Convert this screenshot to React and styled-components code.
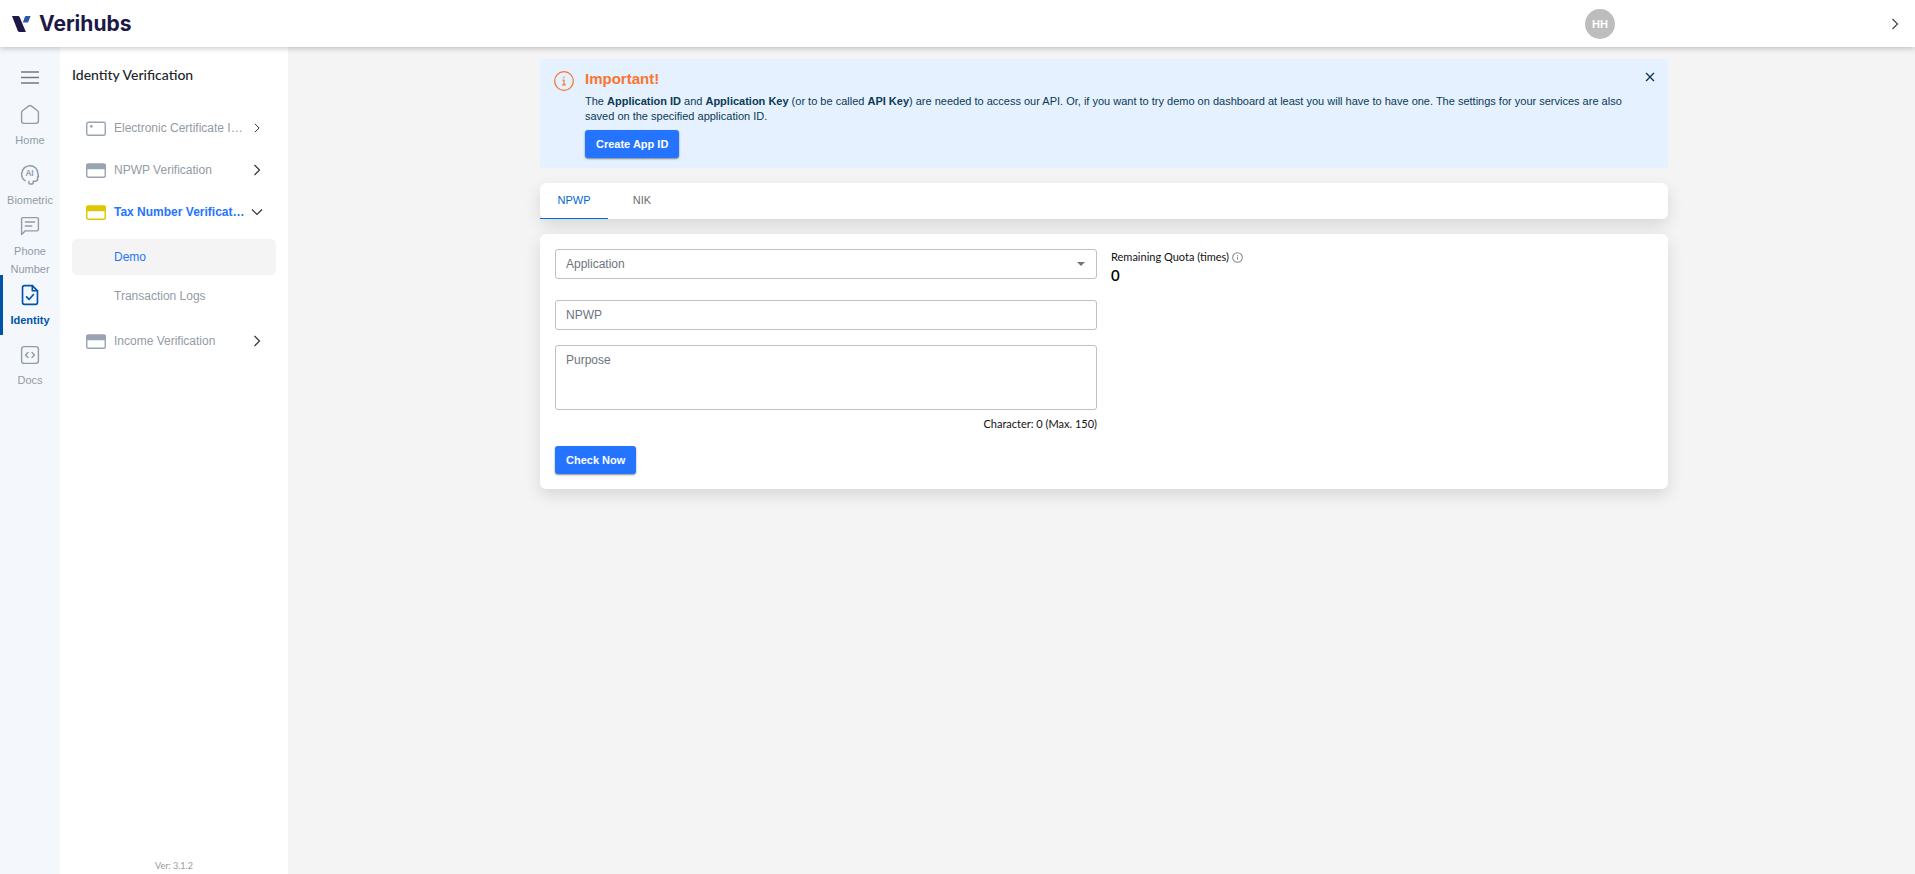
// App.jsx
import React, { useState } from "react";
import styled, { createGlobalStyle, css } from "styled-components";

const colors = {
  primary: "#2574ff",
  active: "#0053a8",
  tab: "#0069d2",
  muted: "#939ba5",
  orange: "#f9762f",
  navy: "#1d1847",
  info: "#e5f1ff",
  infoText: "#0b3a56",
  page: "#f4f4f4",
  rail: "#f4f8fc",
  border: "#c0c0c0",
};

const sans = `"Liberation Sans", Arial, sans-serif`;
const lato = `Lato, sans-serif`;

const GlobalStyle = createGlobalStyle`
  * {
    box-sizing: border-box;
  }

  body {
    margin: 0;
    background: ${colors.page};
    font-family: ${sans};
    font-size: 12px;
  }

  button,
  input,
  select,
  textarea {
    font-family: inherit;
  }
`;

const Page = styled.div`
  min-height: 100vh;
  display: flex;
  flex-direction: column;
`;

const Header = styled.header`
  position: relative;
  z-index: 1;
  height: 47px;
  padding: 0 14px 0 12px;
  display: flex;
  align-items: center;
  justify-content: space-between;
  background: #fff;
  box-shadow: 0 1px 6px rgba(0, 0, 0, 0.25);
`;

const Brand = styled.a`
  display: flex;
  align-items: center;
  gap: 8px;
  color: ${colors.navy};
  font-family: Inter, sans-serif;
  font-size: 21px;
  font-weight: 700;
  line-height: 24px;
  text-decoration: none;
`;

const Account = styled.div`
  width: 316px;
  display: flex;
  align-items: center;
  justify-content: space-between;
`;

const Avatar = styled.span`
  width: 30px;
  height: 30px;
  border-radius: 50%;
  display: grid;
  place-items: center;
  background: #bdbdbd;
  color: #fff;
  font-size: 11px;
  font-weight: 700;
`;

const IconButton = styled.button`
  padding: 0;
  border: 0;
  display: grid;
  place-items: center;
  background: none;
  color: ${(props) => props.$color || "#444"};
  cursor: pointer;
`;

const Body = styled.div`
  flex: 1;
  display: flex;
`;

const Rail = styled.nav`
  flex: 0 0 60px;
  display: flex;
  flex-direction: column;
  align-items: stretch;
  background: ${colors.rail};
`;

const MenuToggle = styled(IconButton)`
  height: 48px;
  padding-top: 12px;
  color: #777;
`;

const RailLink = styled.a`
  height: 60px;
  display: flex;
  flex-direction: column;
  align-items: center;
  justify-content: center;
  gap: 2px;
  color: ${colors.muted};
  font-size: 11px;
  line-height: 18px;
  text-align: center;
  text-decoration: none;

  svg {
    flex: none;
  }

  ${(props) =>
    props.$active &&
    css`
      color: ${colors.active};
      font-weight: 700;
      box-shadow: inset 3px 0 0 ${colors.active};
    `}
`;

const Panel = styled.aside`
  flex: 0 0 228px;
  padding: 16px 12px 0;
  display: flex;
  flex-direction: column;
  background: #fff;
`;

const PanelTitle = styled.h2`
  margin: 0 0 20px;
  color: #212529;
  font-family: ${lato};
  font-size: 14px;
  font-weight: 500;
  line-height: 24px;
`;

const MenuRow = styled.a`
  height: 42px;
  padding: 0 8px 0 14px;
  display: flex;
  align-items: center;
  color: ${(props) => (props.$active ? colors.primary : colors.muted)};
  font-weight: ${(props) => (props.$active ? 700 : 400)};
  line-height: 18px;
  text-decoration: none;

  svg {
    flex: none;
  }
`;

const MenuLabel = styled.span`
  width: 132px;
  margin-left: 8px;
  overflow: hidden;
  text-overflow: ellipsis;
  white-space: nowrap;
`;

const MenuArrow = styled.span`
  flex: 1;
  display: grid;
  place-items: center;
  color: #333;
`;

const SubMenu = styled.div`
  padding: 6px 0;
  display: flex;
  flex-direction: column;
  gap: 3px;
`;

const SubLink = styled.a`
  height: 36px;
  padding-left: 42px;
  border-radius: 5px;
  display: flex;
  align-items: center;
  background: ${(props) => (props.$active ? colors.page : "transparent")};
  color: ${(props) => (props.$active ? colors.primary : colors.muted)};
  text-decoration: none;
`;

const Version = styled.p`
  margin: auto 0 0;
  color: ${colors.muted};
  font-family: ${lato};
  font-size: 9px;
  line-height: 16px;
  text-align: center;
`;

const Main = styled.main`
  flex: 1;
  padding: 12px 0 12px 5px;
`;

const Container = styled.div`
  max-width: 1128px;
  margin: 0 auto;
  display: flex;
  flex-direction: column;
  gap: 15px;
`;

const Alert = styled.section`
  padding: 10px 10px 10px 12px;
  border-radius: 4px;
  display: flex;
  align-items: flex-start;
  background: ${colors.info};
  color: ${colors.infoText};
`;

const AlertIcon = styled.span`
  flex: 0 0 33px;
  padding: 2px 0 0 2px;
  color: ${colors.orange};

  svg {
    display: block;
  }
`;

const AlertBody = styled.div`
  flex: 1;
  margin-right: 10px;
  display: flex;
  flex-direction: column;
  align-items: flex-start;
`;

const AlertTitle = styled.h3`
  margin: 0 0 5px;
  color: ${colors.orange};
  font-size: 15px;
  font-weight: 700;
  line-height: 20px;
`;

const AlertText = styled.p`
  margin: 0 0 6px;
  font-size: 11px;
  line-height: 15px;
`;

const PrimaryButton = styled.button`
  height: 28px;
  padding: 0 11px;
  border: 0;
  border-radius: 3px;
  background: ${colors.primary};
  color: #fff;
  font-size: 11px;
  font-weight: 700;
  box-shadow: 0 1px 2px rgba(0, 0, 0, 0.45);
  cursor: pointer;
`;

const Card = styled.section`
  border-radius: 6px;
  background: #fff;
  box-shadow: 0 6px 16px rgba(0, 0, 0, 0.12);
`;

const Tabs = styled(Card)`
  height: 36px;
  display: flex;
`;

const Tab = styled.button`
  width: 68px;
  padding: 0 0 1px;
  border: 0;
  border-bottom: 1px solid ${(props) => (props.$active ? colors.tab : "transparent")};
  background: none;
  color: ${(props) => (props.$active ? colors.tab : "#6c6c6c")};
  font-size: 11px;
  cursor: pointer;
`;

const FormCard = styled(Card)`
  padding: 15px;
  display: grid;
  grid-template-columns: 1fr 1fr;
  gap: 14px;
`;

const Form = styled.form`
  display: flex;
  flex-direction: column;
  align-items: stretch;
`;

const fieldStyle = css`
  width: 100%;
  border: 1px solid ${colors.border};
  border-radius: 3px;
  background: #fff;
  color: #6c757d;
  font-size: 12px;
  outline: none;

  &::placeholder {
    color: #6c757d;
    opacity: 1;
  }
`;

const SelectBox = styled.div`
  margin-bottom: 21px;
  display: grid;
  align-items: center;

  > * {
    grid-area: 1 / 1;
  }

  svg {
    margin-right: 12px;
    justify-self: end;
    color: #757575;
    pointer-events: none;
  }
`;

const Select = styled.select`
  ${fieldStyle}
  height: 30px;
  padding: 0 10px;
  appearance: none;
`;

const Input = styled.input`
  ${fieldStyle}
  height: 30px;
  margin-bottom: 15px;
  padding: 0 10px;
`;

const TextArea = styled.textarea`
  ${fieldStyle}
  height: 65px;
  padding: 6px 10px;
  line-height: 16px;
  resize: none;
`;

const Counter = styled.p`
  margin: 5px 0 13px;
  color: #111;
  font-family: ${lato};
  font-size: 11px;
  line-height: 18px;
  text-align: right;
`;

const Submit = styled(PrimaryButton)`
  align-self: flex-start;
`;

const QuotaLabel = styled.p`
  margin: 0;
  display: flex;
  align-items: center;
  gap: 3px;
  color: #111;
  font-family: ${lato};
  font-size: 11px;
  line-height: 16px;

  svg {
    color: #8a8a8a;
  }
`;

const QuotaValue = styled.p`
  margin: 0;
  color: #000;
  font-family: ${lato};
  font-size: 15px;
  font-weight: 600;
  line-height: 20px;
`;

const Icon = ({ size = 24, width = 1.5, children }) => (
  <svg
    width={size}
    height={size}
    viewBox="0 0 24 24"
    fill="none"
    stroke="currentColor"
    strokeWidth={width}
    strokeLinecap="round"
    strokeLinejoin="round"
    aria-hidden="true"
  >
    {children}
  </svg>
);

const Logo = () => (
  <svg width="19" height="18" viewBox="0 0 19 18" aria-hidden="true">
    <path d="M0 1H6Q7.200 1 7.700 2.200L13.900 17H7.800Q6.300 17 5.600 15.400Z" fill={colors.navy} />
    <path d="M13.900 1H18.600L16.500 6.400Q16 7.600 14.800 7.600H10.900L12.800 2Q13.200 1 13.900 1Z" fill="#2b57b0" />
  </svg>
);

const Chevron = ({ down, size = 12 }) => (
  <svg
    width={size}
    height={size}
    viewBox="0 0 12 12"
    fill="none"
    stroke="currentColor"
    strokeWidth="1.2"
    aria-hidden="true"
  >
    <path d={down ? "M1 3.500L6 8.500L11 3.500" : "M3.500 1L8.500 6L3.500 11"} />
  </svg>
);

const CardIcon = ({ color = "#9aa3b2", outline }) => (
  <svg width="20" height="15" viewBox="0 0 20 15" fill="none" aria-hidden="true">
    <rect x=".75" y="1.250" width="18.500" height="13" rx="1.500" stroke={color} strokeWidth="1.400" />
    {outline ? (
      <circle cx="5.300" cy="5.300" r="1.400" fill={color} />
    ) : (
      <path d="M0 6.300V2.300Q0 .5 1.800 .5H18.200Q20 .5 20 2.300V6.300Z" fill={color} />
    )}
  </svg>
);

const HomeIcon = () => (
  <Icon size={28} width={1.2}>
    <path d="M4.800 9.800Q4.800 9 5.500 8.400L11 4.200Q12 3.500 13 4.200L18.500 8.400Q19.200 9 19.200 9.800V17.200Q19.200 19.200 17.200 19.200H6.800Q4.800 19.200 4.800 17.200Z" />
  </Icon>
);

const BiometricIcon = () => (
  <Icon size={28} width={1.3}>
    <path d="M7.800 16.800C6 15.700 4.800 13.600 4.800 11.300C4.800 7.200 8 4 12 4C15.600 4 18.500 6.600 18.700 10.200L19.300 13.500H18.500V15.500Q18.500 17.400 16.800 17.400H14.800V18.500Q14.800 19.800 13.200 19.800H12Q11 19.800 11 18.500V17.600" />
    <text x="11.600" y="13.200" fill="currentColor" stroke="none" fontSize="7" fontWeight="700" textAnchor="middle">
      AI
    </text>
  </Icon>
);

const ChatIcon = () => (
  <Icon size={28} width={1.2}>
    <path d="M4.800 19.200V6Q4.800 4.800 6 4.800H18Q19.200 4.800 19.200 6V15Q19.200 16.200 18 16.200H7.800Z" />
    <path d="M8 8.600H16M8 12H13.500" />
  </Icon>
);

const IdentityIcon = () => (
  <Icon size={28} width={1.4}>
    <path d="M14 4H7.200Q5.600 4 5.600 5.600V18.400Q5.600 20 7.200 20H16.800Q18.400 20 18.400 18.400V8.400Z" />
    <path d="M14 4V8.400H18.400M9 13.600L11.200 15.800L15 11.600" />
  </Icon>
);

const DocsIcon = () => (
  <Icon size={28} width={1.2}>
    <rect x="4.800" y="4.800" width="14.400" height="14.400" rx="2" />
    <path d="M10.300 9.800L8.200 12L10.300 14.200M13.700 9.800L15.800 12L13.700 14.200" />
  </Icon>
);

const AlertInfoIcon = () => (
  <Icon size={20} width={1.5}>
    <circle cx="12" cy="12" r="11.200" />
    <path d="M12 7.300V7.800M10.800 11H12V16.500M10.300 16.500H13.700" />
  </Icon>
);

const QuotaInfoIcon = () => (
  <Icon size={11} width={2.2}>
    <circle cx="12" cy="12" r="10.500" />
    <path d="M12 11V16M12 7.500V7.600" />
  </Icon>
);

const railItems = [
  { label: "Home", icon: HomeIcon },
  { label: "Biometric", icon: BiometricIcon },
  { label: "Phone Number", icon: ChatIcon },
  { label: "Identity", icon: IdentityIcon, active: true },
  { label: "Docs", icon: DocsIcon },
];

const App = () => {
  const [tab, setTab] = useState("NPWP");
  const [purpose, setPurpose] = useState("");
  const [showAlert, setShowAlert] = useState(true);

  return (
    <Page>
      <GlobalStyle />
      <Header>
        <Brand href="#">
          <Logo />
          Verihubs
        </Brand>
        <Account>
          <Avatar>HH</Avatar>
          <IconButton type="button" aria-label="Open account menu">
            <Chevron />
          </IconButton>
        </Account>
      </Header>

      <Body>
        <Rail>
          <MenuToggle type="button" aria-label="Toggle menu">
            <svg width="18" height="13" viewBox="0 0 18 13" stroke="currentColor" strokeWidth="1.300">
              <path d="M0 1H18M0 6.500H18M0 12H18" />
            </svg>
          </MenuToggle>
          {railItems.map(({ label, icon: ItemIcon, active }) => (
            <RailLink key={label} href="#" $active={active}>
              <ItemIcon />
              {label}
            </RailLink>
          ))}
        </Rail>

        <Panel>
          <PanelTitle>Identity Verification</PanelTitle>
          <MenuRow href="#">
            <CardIcon outline />
            <MenuLabel>Electronic Certificate Issuance</MenuLabel>
            <MenuArrow>
              <Chevron size={10} />
            </MenuArrow>
          </MenuRow>
          <MenuRow href="#">
            <CardIcon />
            <MenuLabel>NPWP Verification</MenuLabel>
            <MenuArrow>
              <Chevron />
            </MenuArrow>
          </MenuRow>
          <MenuRow href="#" $active>
            <CardIcon color="#dfc600" />
            <MenuLabel>Tax Number Verification</MenuLabel>
            <MenuArrow>
              <Chevron down />
            </MenuArrow>
          </MenuRow>
          <SubMenu>
            <SubLink href="#" $active>
              Demo
            </SubLink>
            <SubLink href="#">Transaction Logs</SubLink>
          </SubMenu>
          <MenuRow href="#">
            <CardIcon />
            <MenuLabel>Income Verification</MenuLabel>
            <MenuArrow>
              <Chevron />
            </MenuArrow>
          </MenuRow>
          <Version>Ver: 3.1.2</Version>
        </Panel>

        <Main>
          <Container>
            {showAlert && (
              <Alert>
                <AlertIcon>
                  <AlertInfoIcon />
                </AlertIcon>
                <AlertBody>
                  <AlertTitle>Important!</AlertTitle>
                  <AlertText>
                    The <b>Application ID</b> and <b>Application Key</b> (or to be called <b>API Key</b>) are needed to
                    access our API. Or, if you want to try demo on dashboard at least you will have to have one. The
                    settings for your services are also saved on the specified application ID.
                  </AlertText>
                  <PrimaryButton type="button">Create App ID</PrimaryButton>
                </AlertBody>
                <IconButton type="button" aria-label="Close" $color={colors.infoText} onClick={() => setShowAlert(false)}>
                  <Icon size={16} width={2}>
                    <path d="M6.500 6.500L17.500 17.500M17.500 6.500L6.500 17.500" />
                  </Icon>
                </IconButton>
              </Alert>
            )}

            <Tabs role="tablist">
              {["NPWP", "NIK"].map((name) => (
                <Tab
                  key={name}
                  type="button"
                  role="tab"
                  aria-selected={tab === name}
                  $active={tab === name}
                  onClick={() => setTab(name)}
                >
                  {name}
                </Tab>
              ))}
            </Tabs>

            <FormCard>
              <Form onSubmit={(e) => e.preventDefault()}>
                <SelectBox>
                  <Select aria-label="Application">
                    <option>Application</option>
                  </Select>
                  <svg width="8" height="4" viewBox="0 0 8 4" aria-hidden="true">
                    <path d="M0 0H8L4 4Z" fill="currentColor" />
                  </svg>
                </SelectBox>
                <Input aria-label="NPWP" placeholder="NPWP" />
                <TextArea
                  aria-label="Purpose"
                  placeholder="Purpose"
                  maxLength={150}
                  value={purpose}
                  onChange={(e) => setPurpose(e.target.value)}
                />
                <Counter>Character: {purpose.length} (Max. 150)</Counter>
                <Submit type="submit">Check Now</Submit>
              </Form>
              <div>
                <QuotaLabel>
                  Remaining Quota (times)
                  <QuotaInfoIcon />
                </QuotaLabel>
                <QuotaValue>0</QuotaValue>
              </div>
            </FormCard>
          </Container>
        </Main>
      </Body>
    </Page>
  );
};

export default App;
